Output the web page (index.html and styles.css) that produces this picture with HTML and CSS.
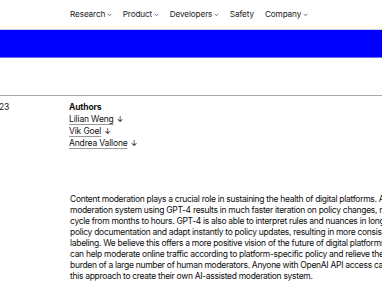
FILE: index.html
```html
<!DOCTYPE html>
<html>
<head>
<meta charset="utf-8">
<link rel="stylesheet" href="styles.css">
</head>
<body>
<header class="nav">
  <a class="nav-item">Research<svg class="chev" viewBox="0 0 8 5"><path d="M1 1l3 3 3-3"/></svg></a>
  <a class="nav-item">Product<svg class="chev" viewBox="0 0 8 5"><path d="M1 1l3 3 3-3"/></svg></a>
  <a class="nav-item">Developers<svg class="chev" viewBox="0 0 8 5"><path d="M1 1l3 3 3-3"/></svg></a>
  <a class="nav-item">Safety</a>
  <a class="nav-item">Company<svg class="chev" viewBox="0 0 8 5"><path d="M1 1l3 3 3-3"/></svg></a>
</header>
<div class="strip"></div>
<div class="band"></div>
<div class="meta">
  <div class="date">23</div>
  <div class="authors">
    <div class="authors-title">Authors</div>
    <div><a class="author">Lilian Weng</a><span class="arrow">↓</span></div>
    <div><a class="author">Vik Goel</a><span class="arrow">↓</span></div>
    <div><a class="author">Andrea Vallone</a><span class="arrow">↓</span></div>
  </div>
</div>
<p class="lead">
  <span class="line">Content moderation plays a crucial role in sustaining the health of digital platforms. A content</span>
  <span class="line">moderation system using GPT-4 results in much faster iteration on policy changes, reducing the</span>
  <span class="line">cycle from months to hours. GPT-4 is also able to interpret rules and nuances in long content</span>
  <span class="line">policy documentation and adapt instantly to policy updates, resulting in more consistent</span>
  <span class="line">labeling. We believe this offers a more positive vision of the future of digital platforms, where AI</span>
  <span class="line">can help moderate online traffic according to platform-specific policy and relieve the mental</span>
  <span class="line">burden of a large number of human moderators. Anyone with OpenAI API access can implement</span>
  <span class="line">this approach to create their own AI-assisted moderation system.</span>
</p>
</body>
</html>
```
FILE: styles.css
```css
html, body {
  margin: 0;
  padding: 0;
  background: #fff;
  overflow: hidden;
}
body {
  font-family: Inter, "Noto Sans", sans-serif;
  color: #111;
  width: 382px;
}
.nav {
  height: 24px;
  box-sizing: border-box;
  padding: 3px 0 0 70px;
  display: flex;
  align-items: center;
  gap: 11px;
  font-size: 8.2px;
  letter-spacing: -0.12px;
  white-space: nowrap;
}
.nav-item {
  display: flex;
  align-items: center;
  gap: 1.5px;
  color: #222;
}
.chev {
  width: 5px;
  height: 3.5px;
  fill: none;
  stroke: #333;
  stroke-width: 1.1;
  margin-top: 2px;
}
.strip {
  height: 5px;
  background: #fffdf4;
  border-bottom: 1px solid #c9c9f7;
}
.band {
  height: 27px;
  background: #0000ff;
  border-bottom: 1px solid #6a6af5;
}
.meta {
  margin-top: 37px;
  border-top: 1px solid #a9a9a9;
  display: flex;
  padding-top: 5px;
  font-size: 8.5px;
  line-height: 12px;
  letter-spacing: -0.15px;
}
.date {
  width: 70px;
  margin-left: -1px;
  color: #222;
}
.authors-title {
  font-weight: 700;
}
.author {
  color: #111;
  text-decoration: underline;
  text-decoration-color: #999;
  text-underline-offset: 1.5px;
}
.arrow {
  margin-left: 3px;
  font-size: 8px;
}
.lead {
  margin: 45px 0 0 70px;
  font-size: 8.5px;
  line-height: 11px;
  letter-spacing: -0.3px;
  color: #0d0d0d;
  white-space: nowrap;
}
.line {
  display: block;
}
```
